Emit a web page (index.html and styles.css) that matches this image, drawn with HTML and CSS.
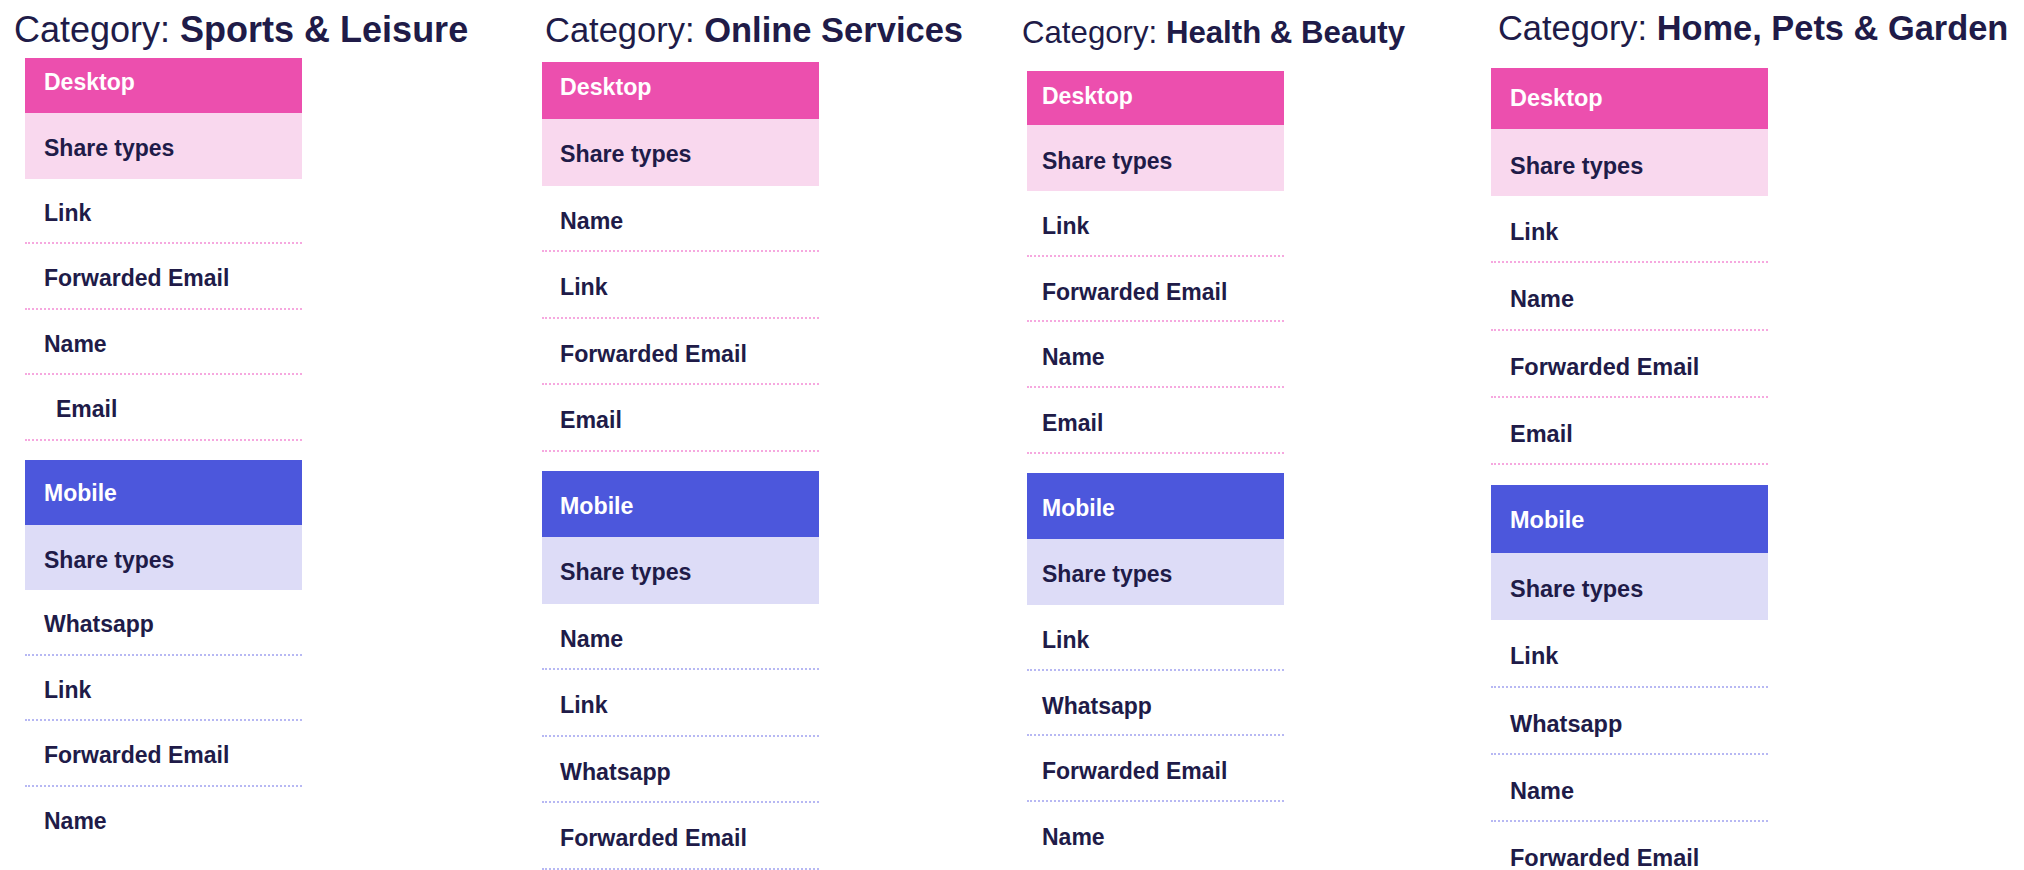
FILE: index.html
```html
<!DOCTYPE html>
<html lang="en">
<head>
<meta charset="utf-8">
<title>Share types by category</title>
<link rel="stylesheet" href="styles.css">
</head>
<body>
<main class="board">

  <section class="category cat-1">
    <h2 class="category__title">Category: <strong>Sports &amp; Leisure</strong></h2>
    <div class="platform platform--desktop">
      <div class="platform__head">Desktop</div>
      <div class="platform__sub">Share types</div>
      <ul class="platform__list">
        <li class="item">Link</li>
        <li class="item">Forwarded Email</li>
        <li class="item">Name</li>
        <li class="item item--indent">Email</li>
      </ul>
    </div>
    <div class="platform platform--mobile">
      <div class="platform__head">Mobile</div>
      <div class="platform__sub">Share types</div>
      <ul class="platform__list">
        <li class="item">Whatsapp</li>
        <li class="item">Link</li>
        <li class="item">Forwarded Email</li>
        <li class="item item--plain">Name</li>
      </ul>
    </div>
  </section>

  <section class="category cat-2">
    <h2 class="category__title">Category: <strong>Online Services</strong></h2>
    <div class="platform platform--desktop">
      <div class="platform__head">Desktop</div>
      <div class="platform__sub">Share types</div>
      <ul class="platform__list">
        <li class="item">Name</li>
        <li class="item">Link</li>
        <li class="item">Forwarded Email</li>
        <li class="item">Email</li>
      </ul>
    </div>
    <div class="platform platform--mobile">
      <div class="platform__head">Mobile</div>
      <div class="platform__sub">Share types</div>
      <ul class="platform__list">
        <li class="item">Name</li>
        <li class="item">Link</li>
        <li class="item">Whatsapp</li>
        <li class="item">Forwarded Email</li>
      </ul>
    </div>
  </section>

  <section class="category cat-3">
    <h2 class="category__title">Category: <strong>Health &amp; Beauty</strong></h2>
    <div class="platform platform--desktop">
      <div class="platform__head">Desktop</div>
      <div class="platform__sub">Share types</div>
      <ul class="platform__list">
        <li class="item">Link</li>
        <li class="item">Forwarded Email</li>
        <li class="item">Name</li>
        <li class="item">Email</li>
      </ul>
    </div>
    <div class="platform platform--mobile">
      <div class="platform__head">Mobile</div>
      <div class="platform__sub">Share types</div>
      <ul class="platform__list">
        <li class="item">Link</li>
        <li class="item">Whatsapp</li>
        <li class="item">Forwarded Email</li>
        <li class="item item--plain">Name</li>
      </ul>
    </div>
  </section>

  <section class="category cat-4">
    <h2 class="category__title">Category: <strong>Home, Pets &amp; Garden</strong></h2>
    <div class="platform platform--desktop">
      <div class="platform__head">Desktop</div>
      <div class="platform__sub">Share types</div>
      <ul class="platform__list">
        <li class="item">Link</li>
        <li class="item">Name</li>
        <li class="item">Forwarded Email</li>
        <li class="item">Email</li>
      </ul>
    </div>
    <div class="platform platform--mobile">
      <div class="platform__head">Mobile</div>
      <div class="platform__sub">Share types</div>
      <ul class="platform__list">
        <li class="item">Link</li>
        <li class="item">Whatsapp</li>
        <li class="item">Name</li>
        <li class="item">Forwarded Email</li>
      </ul>
    </div>
  </section>

</main>
</body>
</html>
```

FILE: styles.css
```css
html, body {
  margin: 0;
  padding: 0;
  background: #ffffff;
  height: 870px;
  overflow: hidden;
}

body {
  font-family: "Liberation Sans", Arial, Helvetica, sans-serif;
  color: #201b48;
}

.board {
  display: flex;
  align-items: flex-start;
  padding-left: 14px;
}

.category {
  display: flex;
  flex-direction: column;
  align-items: flex-start;
  flex: none;
}

.cat-1 {
  width: 528px;
  --title-size: 36px;
  --title-top: 11.5px;
  --title-gap: 10.5px;
  --title-ml: 0px;
  --table-w: 277px;
  --table-ml: 11px;
  --pl: 19px;
  --fs: 23px;
  --head-h: 55px;
  --head-pt: 13px;
  --sub-h: 65.5px;
  --sub-pt: 24px;
  --row-h: 65.5px;
  --row-pt: 23px;
  --gap: 19px;
  --mhead-h: 65px;
  --mhead-pt: 22.5px;
  --msub-h: 65.5px;
  --msub-pt: 24px;
}

.cat-2 {
  width: 480px;
  --title-size: 34.5px;
  --title-top: 12.5px;
  --title-gap: 15px;
  --title-ml: 3px;
  --table-w: 277px;
  --table-ml: 0px;
  --pl: 18px;
  --fs: 23.2px;
  --head-h: 57px;
  --head-pt: 14px;
  --sub-h: 66.5px;
  --sub-pt: 24px;
  --row-h: 66.5px;
  --row-pt: 24px;
  --gap: 19.5px;
  --mhead-h: 66px;
  --mhead-pt: 24px;
  --msub-h: 66.5px;
  --msub-pt: 24px;
}

.cat-3 {
  width: 469px;
  --title-size: 31.2px;
  --title-top: 17px;
  --title-gap: 22.8px;
  --title-ml: 0px;
  --table-w: 257px;
  --table-ml: 5px;
  --pl: 15px;
  --fs: 23px;
  --head-h: 54px;
  --head-pt: 13.7px;
  --sub-h: 66px;
  --sub-pt: 25px;
  --row-h: 65.7px;
  --row-pt: 24px;
  --gap: 19.2px;
  --mhead-h: 66px;
  --mhead-pt: 24px;
  --msub-h: 66px;
  --msub-pt: 24px;
}

.cat-4 {
  flex: 1;
  --title-size: 34.4px;
  --title-top: 11.4px;
  --title-gap: 22.2px;
  --title-ml: 7px;
  --table-w: 277px;
  --table-ml: 0px;
  --pl: 19px;
  --fs: 23.5px;
  --head-h: 61px;
  --head-pt: 19px;
  --sub-h: 67px;
  --sub-pt: 26px;
  --row-h: 67.3px;
  --row-pt: 25px;
  --gap: 20.3px;
  --mhead-h: 67.5px;
  --mhead-pt: 24px;
  --msub-h: 67.5px;
  --msub-pt: 25px;
}

.category__title {
  margin: var(--title-top) 0 var(--title-gap) var(--title-ml);
  font-size: var(--title-size);
  line-height: 1;
  font-weight: 400;
  white-space: nowrap;
  color: #201b48;
}

.category__title strong {
  font-weight: 700;
}

.platform {
  width: var(--table-w);
  margin-left: var(--table-ml);
  font-size: var(--fs);
  line-height: 1;
  font-weight: 700;
}

.platform--mobile {
  margin-top: var(--gap);
}

.platform__head,
.platform__sub,
.item {
  box-sizing: border-box;
  padding-left: var(--pl);
  white-space: nowrap;
}

.platform__head {
  color: #ffffff;
  height: var(--head-h);
  padding-top: var(--head-pt);
}

.platform__sub {
  height: var(--sub-h);
  padding-top: var(--sub-pt);
}

.platform--desktop .platform__head {
  background: #ec4fae;
}

.platform--desktop .platform__sub {
  background: #f9d8ee;
}

.platform--mobile .platform__head {
  background: #4c57dc;
  height: var(--mhead-h);
  padding-top: var(--mhead-pt);
}

.platform--mobile .platform__sub {
  background: #dddcf7;
  height: var(--msub-h);
  padding-top: var(--msub-pt);
}

.platform__list {
  list-style: none;
  margin: 0;
  padding: 0;
}

.item {
  height: var(--row-h);
  padding-top: var(--row-pt);
  border-bottom: 2px dotted #f6a8df;
}

.platform--mobile .item {
  border-bottom-color: #b7b8f3;
}

.platform--mobile .item--plain {
  border-bottom-color: transparent;
}

.item--indent {
  padding-left: calc(var(--pl) + 12px);
}
```
